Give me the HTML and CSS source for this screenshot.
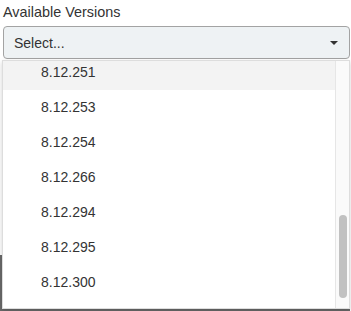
FILE: index.html
```html
<!DOCTYPE html>
<html lang="en">
<head>
  <meta charset="UTF-8">
  <title>Available Versions</title>
  <link rel="stylesheet" href="styles.css">
</head>
<body>

<div class="field">
  <label class="field-label">Available Versions</label>
  <div class="select">
    <span class="select-value">Select...</span>
    <span class="caret"></span>
  </div>

  <!-- open dropdown -->
  <div class="menu">
    <ul class="options">
      <li class="option hover">8.12.251</li>
      <li class="option">8.12.253</li>
      <li class="option">8.12.254</li>
      <li class="option">8.12.266</li>
      <li class="option">8.12.294</li>
      <li class="option">8.12.295</li>
      <li class="option">8.12.300</li>
    </ul>
    <div class="scrollbar">
      <div class="thumb"></div>
    </div>
  </div>
</div>

<div class="backdrop"></div>

</body>
</html>
```

FILE: styles.css
```css
body {
  margin: 0;
  background: #fff;
  font-family: 'Liberation Sans', Arial, sans-serif;
  font-size: 14px;
  color: #333;
  overflow: hidden;
}

.field {
  position: relative;
  padding-top: 2px;
}

.field-label {
  display: block;
  font-size: 14.4px;
  line-height: 20px;
  padding-left: 3px;
  margin-bottom: 4px;
}

.select {
  margin: 0 1px 0 3px;
  height: 33px;
  box-sizing: border-box;
  border: 1px solid #a3a3a3;
  border-radius: 4px;
  background: #eef2f4;
  display: flex;
  align-items: center;
  justify-content: space-between;
  padding: 0 10px 0 10px;
}

.select-value {
  padding-top: 1px;
}

.caret {
  width: 0;
  height: 0;
  border-left: 4px solid transparent;
  border-right: 4px solid transparent;
  border-top: 4px solid #333;
  margin-right: 1px;
}

/* dropdown overlays the page */
.menu {
  position: absolute;
  top: 60px;
  left: 2px;
  right: 1px;
  height: 249px;
  box-sizing: border-box;
  background: #fff;
  border: 1px solid #ddd;
  box-shadow: 0 2px 5px rgba(0,0,0,0.18);
  display: flex;
  overflow: hidden;
  z-index: 2;
}

.options {
  list-style: none;
  margin: -6px 0 0 0;
  padding: 0;
  flex: 1;
}

.option {
  height: 35px;
  line-height: 35px;
  padding-left: 38px;
}

.option.hover {
  background: #f3f3f3;
}

.scrollbar {
  width: 13px;
  background: #fafafa;
  border-left: 1px solid #e6e6e6;
  position: relative;
}

.thumb {
  position: absolute;
  top: 154px;
  left: 3px;
  width: 8px;
  height: 83px;
  border-radius: 4px;
  background: #c1c1c1;
}

.backdrop {
  margin: 196px 1px 0 0;
  height: 60px;
  background: #6a6a6a;
}
```
